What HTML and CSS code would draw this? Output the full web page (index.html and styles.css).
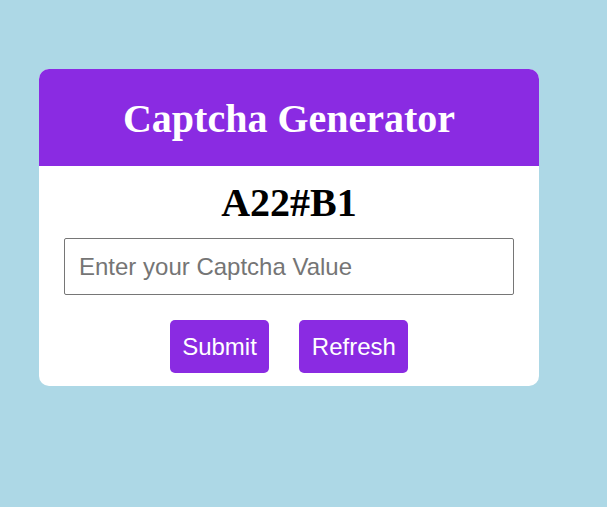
FILE: index.html
```html
<!DOCTYPE html>
<html>
<head>
<meta charset="utf-8">
<link rel="stylesheet" href="styles.css">
</head>
<body>
<div class="page">
  <div class="card">
    <div class="header"><h1 class="title">Captcha Generator</h1></div>
    <div class="body">
      <div class="code">A22#B1</div>
      <input class="field" type="text" placeholder="Enter your Captcha Value">
      <div class="actions">
        <button class="btn">Submit</button>
        <button class="btn">Refresh</button>
      </div>
    </div>
  </div>
</div>
</body>
</html>
```
FILE: styles.css
```css
html, body {
  margin: 0;
  padding: 0;
  background: #add8e6;
}
.page {
  padding: 69px 0 0 39px;
}
.card {
  width: 500px;
  background: #ffffff;
  border-radius: 10px;
  overflow: hidden;
}
.header {
  background: #8a2be2;
  height: 97px;
  display: flex;
  align-items: center;
  justify-content: center;
}
.title {
  margin: 0;
  color: #ffffff;
  font-family: "Liberation Serif", "Times New Roman", serif;
  font-weight: bold;
  font-size: 40px;
  line-height: 46px;
  padding-top: 2px;
}
.body {
  display: flex;
  flex-direction: column;
  align-items: center;
  padding: 14px 0 13px;
}
.code {
  font-family: "Liberation Serif", "Times New Roman", serif;
  font-weight: bold;
  font-size: 40px;
  line-height: 46px;
  color: #000;
}
.field {
  box-sizing: border-box;
  margin-top: 12px;
  width: 450px;
  height: 57px;
  padding: 0 14px;
  border: 1px solid #767676;
  border-radius: 2px;
  font-family: "Liberation Sans", Arial, sans-serif;
  font-size: 24px;
  color: #000;
  outline: none;
}
.field::placeholder {
  color: #757575;
}
.actions {
  margin-top: 25px;
  display: flex;
  gap: 30px;
}
.btn {
  height: 53px;
  padding: 0 12.5px;
  border: none;
  border-radius: 5px;
  background: #8a2be2;
  color: #ffffff;
  font-family: "Liberation Sans", Arial, sans-serif;
  font-size: 24px;
  cursor: pointer;
}
```
